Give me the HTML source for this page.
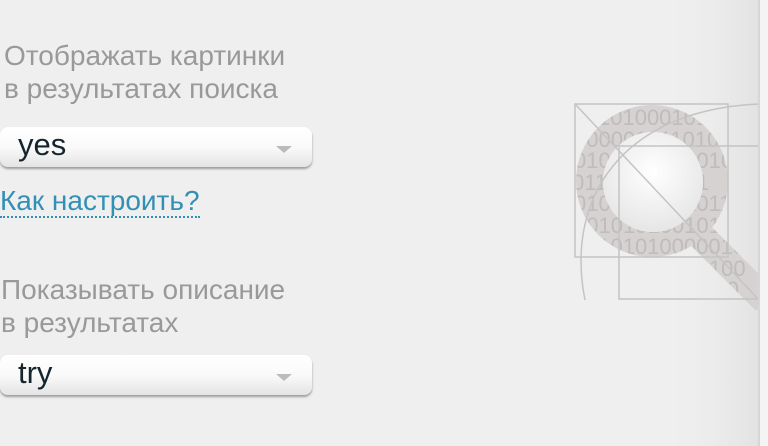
<!DOCTYPE html>
<html><head><meta charset="utf-8"><style>
body{margin:0;width:768px;height:446px;background:#efefef;overflow:hidden;position:relative;font-family:"Liberation Sans",sans-serif}
.lbl{position:absolute;left:3px;color:#999;font-size:28px;line-height:33px}
.sel{position:absolute;left:0;width:312px;height:40px;border-radius:8px;background:linear-gradient(#fff 0%,#fafafa 50%,#e4e4e4 100%);box-shadow:0 2px 2px rgba(0,0,0,.35)}
.sel span{position:absolute;left:18px;top:0px;font-size:31px;color:#15252e}
.sel i{position:absolute;right:20px;top:19px;border-left:8px solid transparent;border-right:8px solid transparent;border-top:7px solid #bbb}
a{position:absolute;left:0;top:186px;font-size:28px;color:#3390b5;text-decoration:none;border-bottom:2px dotted #3390b5;line-height:30px}
</style></head><body>
<div class="lbl" style="top:39px;left:4px">Отображать картинки<br>в результатах поиска</div>
<div class="sel" style="top:127px"><span>yes</span><i></i></div>
<a>Как настроить?</a>
<div class="lbl" style="top:273px;left:1px">Показывать описание<br>в результатах</div>
<div class="sel" style="top:355px"><span>try</span><i></i></div>
<svg style="position:absolute;left:0;top:0" width="768" height="446">
<defs><radialGradient id="g" cx="50%" cy="40%" r="60%"><stop offset="0" stop-color="#fff"/><stop offset="1" stop-color="#e6e6e6"/></radialGradient>
<linearGradient id="r" x1="0" x2="1"><stop offset="0" stop-color="#efefef" stop-opacity="0"/><stop offset="1" stop-color="#e2e2e2"/></linearGradient>
<clipPath id="c"><circle cx="652" cy="181" r="76"/><polygon points="680,215 700,235 760,295 760,300 700,245 670,225"/><rect x="680" y="205" width="79" height="100" transform="rotate(0)"/></clipPath>
<mask id="m"><circle cx="652" cy="181" r="76" fill="#fff"/><line x1="690" y1="225" x2="770" y2="305" stroke="#fff" stroke-width="28"/><circle cx="653" cy="182" r="50" fill="#000"/></mask>
</defs>
<rect x="660" y="0" width="100" height="446" fill="url(#r)"/>
<rect x="760" y="0" width="8" height="446" fill="#f4f4f4"/>
<g clip-path="url(#cl)">
<g mask="url(#m)">
<rect x="570" y="100" width="189" height="210" fill="#d6d2d2"/>
<g fill="#bfbcbc" font-size="22" font-family="Liberation Sans,sans-serif">
<text x="598" y="125">1010001010</text><text x="574" y="147">000001011010</text>
<text x="574" y="168">01010101010101</text>
<text x="572" y="190">011110101111</text>
<text x="574" y="211">0101010101011</text>
<text x="574" y="233">1010101001010</text>
<text x="586" y="254">01010100000101</text>
<text x="660" y="276">0010100</text><text x="690" y="297">1010</text></g>
</g></g>
<circle cx="653" cy="182" r="50" fill="url(#g)"/>
<g fill="none" stroke="#c4c4c4" stroke-width="1.5">
<rect x="575" y="104" width="153" height="153"/>
<rect x="619" y="146" width="140" height="153"/>
<line x1="575" y1="104" x2="759" y2="300"/>
<path d="M585 300 C565 200 620 110 759 104"/>
</g>
<rect x="760" y="0" width="8" height="446" fill="#f4f4f4"/>
<line x1="759" y1="0" x2="759" y2="446" stroke="#d6d6d6" stroke-width="2"/>
</svg>
</body></html>
